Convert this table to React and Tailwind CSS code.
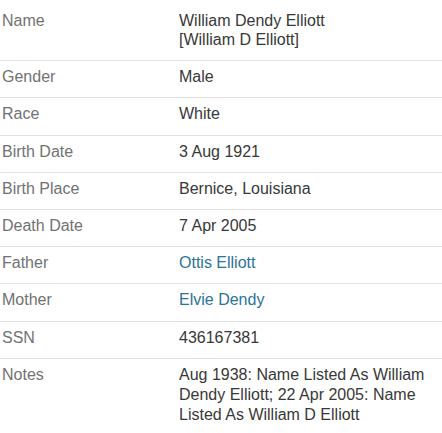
import React from "react";

const rows = [
  { label: "Name", value: ["William Dendy Elliott", "[William D Elliott]"] },
  { label: "Gender", value: "Male" },
  { label: "Race", value: "White" },
  { label: "Birth Date", value: "3 Aug 1921" },
  { label: "Birth Place", value: "Bernice, Louisiana" },
  { label: "Death Date", value: "7 Apr 2005" },
  { label: "Father", value: "Ottis Elliott", link: true },
  { label: "Mother", value: "Elvie Dendy", link: true },
  { label: "SSN", value: "436167381" },
  {
    label: "Notes",
    value:
      "Aug 1938: Name Listed As William Dendy Elliott; 22 Apr 2005: Name Listed As William D Elliott",
    last: true,
  },
];

export default function App() {
  return (
    <div
      className="w-[442px] h-[433px] bg-white pt-[5px] text-[16px] leading-[19px]"
      style={{ fontFamily: '"Liberation Sans", Arial, Helvetica, sans-serif' }}
    >
      {rows.map((r, i) => (
        <div
          key={i}
          className={`grid grid-cols-[179px_1fr] pt-[6px] pb-[11.2px] ${r.last ? "" : "border-b border-[#e2e2e2]"}`}
        >
          <div className="pl-[2px] text-[#727272]">{r.label}</div>
          <div
            className={`pr-[16px] ${r.link ? "text-[#2b7497]" : "text-[#383838]"} ${r.last ? "leading-[20px]" : ""}`}
          >
            {Array.isArray(r.value)
              ? r.value.map((v, j) => <div key={j}>{v}</div>)
              : r.value}
          </div>
        </div>
      ))}
    </div>
  );
}
